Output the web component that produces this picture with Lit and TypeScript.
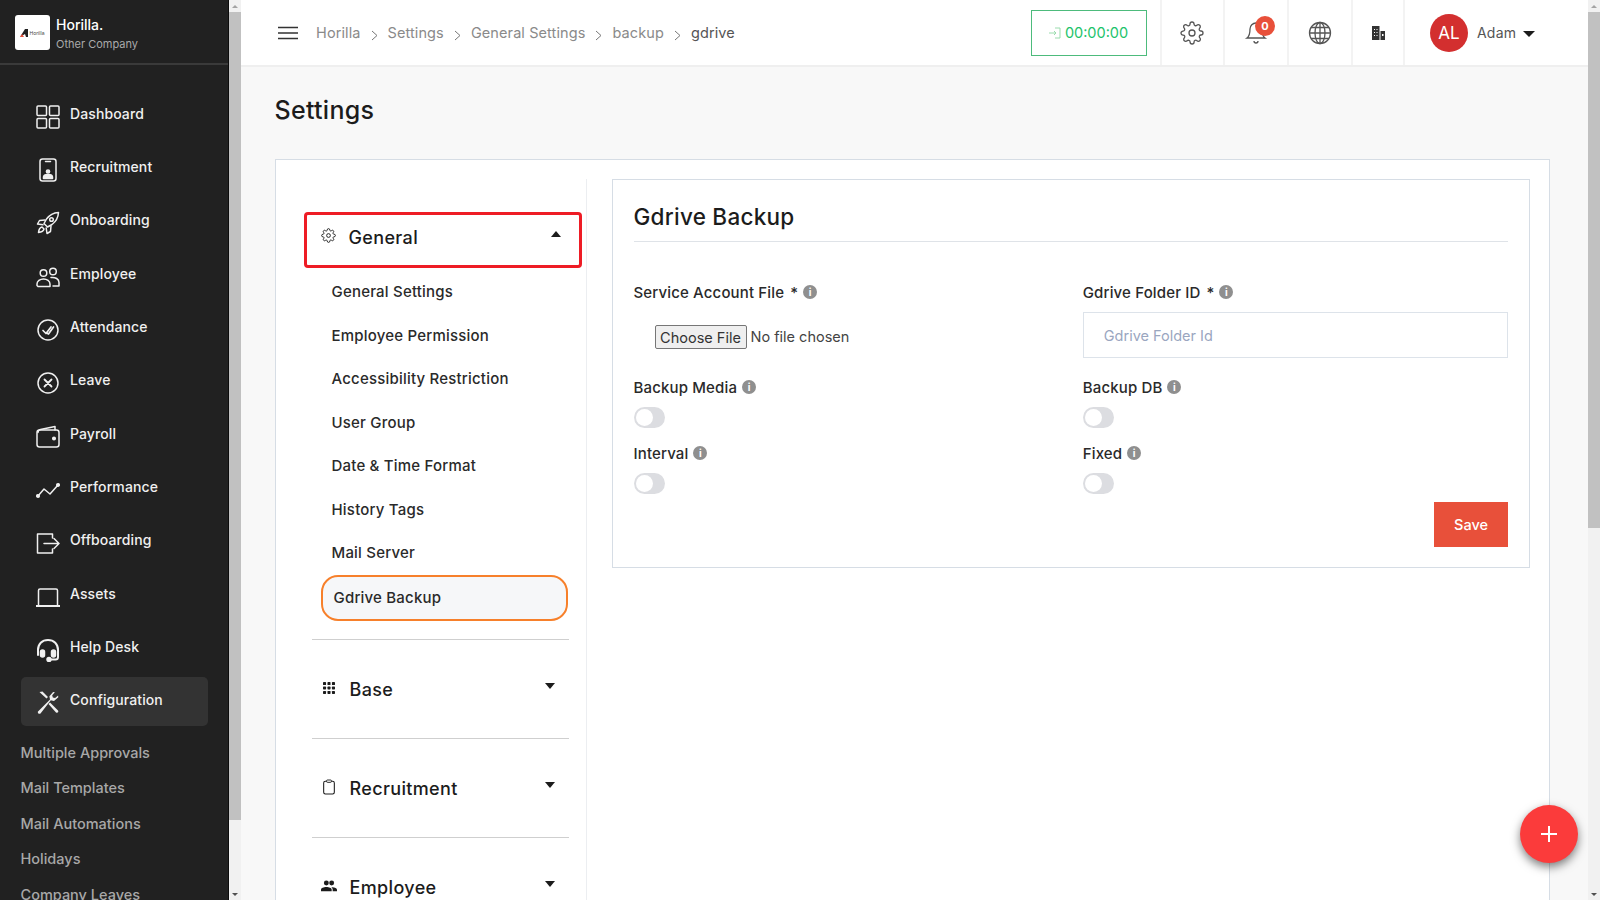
import { LitElement, html, css, svg } from 'lit';
import { customElement } from 'lit/decorators.js';

const GEAR = svg`<circle cx="12" cy="12" r="3"></circle><path d="M19.4 15a1.65 1.65 0 0 0 .33 1.82l.06.06a2 2 0 0 1 0 2.83 2 2 0 0 1-2.83 0l-.06-.06a1.65 1.65 0 0 0-1.82-.33 1.65 1.65 0 0 0-1 1.51V21a2 2 0 0 1-2 2 2 2 0 0 1-2-2v-.09A1.65 1.65 0 0 0 9 19.4a1.65 1.65 0 0 0-1.82.33l-.06.06a2 2 0 0 1-2.83 0 2 2 0 0 1 0-2.83l.06-.06a1.65 1.65 0 0 0 .33-1.82 1.65 1.65 0 0 0-1.51-1H3a2 2 0 0 1-2-2 2 2 0 0 1 2-2h.09A1.65 1.65 0 0 0 4.6 9a1.65 1.65 0 0 0-.33-1.82l-.06-.06a2 2 0 0 1 0-2.83 2 2 0 0 1 2.83 0l.06.06a1.65 1.65 0 0 0 1.82.33H9a1.65 1.65 0 0 0 1-1.51V3a2 2 0 0 1 2-2 2 2 0 0 1 2 2v.09a1.65 1.65 0 0 0 1 1.51 1.65 1.65 0 0 0 1.82-.33l.06-.06a2 2 0 0 1 2.83 0 2 2 0 0 1 0 2.83l-.06.06a1.65 1.65 0 0 0-.33 1.82V9a1.65 1.65 0 0 0 1.51 1H21a2 2 0 0 1 2 2 2 2 0 0 1-2 2h-.09a1.65 1.65 0 0 0-1.51 1z"></path>`;

const NAV_ICONS: Record<string, unknown> = {
  Dashboard: svg`<rect x="1" y="1" width="9.5" height="9.5" rx="1"></rect><rect x="13.5" y="1" width="9.5" height="9.5" rx="1"></rect><rect x="1" y="13.5" width="9.5" height="9.5" rx="1"></rect><rect x="13.5" y="13.5" width="9.5" height="9.5" rx="1"></rect>`,
  Recruitment: svg`<rect x="4" y="1" width="16" height="22" rx="2.5"></rect><path d="M9.5 3.6h5"></path><circle cx="12" cy="13.5" r="1.6" fill="currentColor"></circle><path d="M7.5 20.5v-1.5c0-1.6 1.5-2.6 4.5-2.6s4.5 1 4.5 2.6v1.5z" fill="currentColor"></path>`,
  Onboarding: svg`<path d="M22.5 1.5c-5 .3-9 2.4-12 6.5l-2.5 4.5 3.5 3.5 4.5-2.5c4-3 6.2-7 6.5-12z"></path><circle cx="15.5" cy="8.5" r="1.8"></circle><path d="M9 9l-5.5.5L1.5 13l5.5.8M15 15l-.5 5.5L11 22.5l-.8-5.500"></path><path d="M6 16c-2 .5-3.200 2.500-3.500 5.500 3-.3 5-1.500 5.500-3.500z"></path>`,
  Employee: svg`<circle cx="7.500" cy="8" r="3.300"></circle><circle cx="17" cy="6.500" r="3.300"></circle><path d="M1 20.500v-1.500c0-3 3-5 6.500-5s6.500 2 6.500 5v2.500H2z"></path><path d="M15 12.500c4.500-.5 8 1.500 8 5v3.500h-6"></path>`,
  Attendance: svg`<circle cx="12" cy="12" r="10"></circle><path d="M7 12.500l3 3 5-6.500M11.500 15.500l1 .5 5-7" stroke-width="1.700"></path>`,
  Leave: svg`<circle cx="12" cy="12" r="10"></circle><path d="M8.500 8.500l7 7M15.500 8.500l-7 7" stroke-width="1.800"></path>`,
  Payroll: svg`<path d="M2 7.500c0-1.500.8-2.500 2.500-3L19 1.500v3.500"></path><rect x="1" y="5" width="22" height="17" rx="2.500"></rect><circle cx="18" cy="13.500" r="1.300" fill="currentColor"></circle>`,
  Performance: svg`<path d="M2 18l6-7 6 5 8-9"></path><circle cx="2" cy="18" r="1.300" fill="currentColor"></circle><circle cx="22" cy="7" r="1.300" fill="currentColor"></circle>`,
  Offboarding: svg`<path d="M16.500 7V3H1.500v19h15v-4"></path><path d="M8 12.500h15M18 7.500l5 5-5 5"></path>`,
  Assets: svg`<path d="M2.500 20V5.500c0-.8.500-1.500 1.500-1.500h16c1 0 1.500.700 1.500 1.500V20"></path><path d="M0 21h24" stroke-width="2"></path>`,
  'Help Desk': svg`<path d="M2 16v-4C2 6 6 2 12 2s10 4 10 10v7c0 1.500-1 2.500-2.500 2.500H14" stroke-width="2"></path><path d="M2 12v5" stroke-width="2"></path><rect x="4.500" y="12" width="4" height="7" rx="2" fill="currentColor"></rect><rect x="15.500" y="12" width="4" height="7" rx="2" fill="currentColor"></rect><circle cx="13" cy="21.500" r="2" fill="currentColor"></circle>`,
  Configuration: svg`<path d="M2 21.500L14 9.500l-.6-3.200 3.700-4.300 1.800.2-2.700 3 .6 2.300 2.300.6 3-2.700.2 1.800-4.300 3.700-3.200-.6L4.500 23.500c-1.400 1-3.300-.6-2.500-2z" fill="currentColor" stroke="none"></path><path d="M3.500 2l3-.5 5.500 5.500-1.500 1.500L5 3.500zM12.500 14l1.500-1.500 8 8c1 1.500-.5 3-2 2z" fill="currentColor" stroke="none"></path>`,
};

const NAV = ['Dashboard', 'Recruitment', 'Onboarding', 'Employee', 'Attendance', 'Leave', 'Payroll', 'Performance', 'Offboarding', 'Assets', 'Help Desk', 'Configuration'];
const SUB_NAV = ['Multiple Approvals', 'Mail Templates', 'Mail Automations', 'Holidays', 'Company Leaves'];
const GENERAL = ['General Settings', 'Employee Permission', 'Accessibility Restriction', 'User Group', 'Date & Time Format', 'History Tags', 'Mail Server'];
const CRUMBS = ['Horilla', 'Settings', 'General Settings', 'backup'];

const SECTIONS = [
  { name: 'Base', icon: svg`<g fill="currentColor"><rect x="3" y="3" width="4.600" height="4.600" rx="1"></rect><rect x="9.700" y="3" width="4.600" height="4.600" rx="1"></rect><rect x="16.400" y="3" width="4.600" height="4.600" rx="1"></rect><rect x="3" y="9.700" width="4.600" height="4.600" rx="1"></rect><rect x="9.700" y="9.700" width="4.600" height="4.600" rx="1"></rect><rect x="16.400" y="9.700" width="4.600" height="4.600" rx="1"></rect><rect x="3" y="16.400" width="4.600" height="4.600" rx="1"></rect><rect x="9.700" y="16.400" width="4.600" height="4.600" rx="1"></rect><rect x="16.400" y="16.400" width="4.600" height="4.600" rx="1"></rect></g>` },
  { name: 'Recruitment', icon: svg`<rect x="4" y="3.500" width="16" height="19" rx="2.500" fill="none" stroke="currentColor" stroke-width="1.600"></rect><rect x="8.500" y="1.500" width="7" height="3.500" rx="1" fill="#fff" stroke="currentColor" stroke-width="1.400"></rect>` },
  { name: 'Employee', icon: svg`<g fill="currentColor"><circle cx="16" cy="7.500" r="3.700"></circle><circle cx="8" cy="7.500" r="3.700"></circle><path d="M0 20v-2.500c0-2.500 4-4 8-4s8 1.500 8 4V20z"></path><path d="M17.500 20v-2.500c0-1.500-.7-2.700-2-3.700 4.500-.5 8.500 1.200 8.500 3.700V20z"></path></g>` },
];

@customElement('app-root')
export class AppRoot extends LitElement {
  static styles = css`
    :host {
      display: flex;
      height: 900px;
      overflow: hidden;
      position: relative;
      font-family: Inter, "Noto Sans", sans-serif;
      background: #f8f8f8;
      color: #1c1c1c;
    }
    svg {
      display: block;
      flex: none;
    }

    /* scrollbars */
    .scrollbar {
      flex: none;
      width: 12px;
      height: 900px;
      background: #f1f1f1;
      display: flex;
      flex-direction: column;
      align-items: stretch;
    }
    .arrow {
      flex: none;
      height: 12px;
      display: flex;
      align-items: center;
      justify-content: center;
    }
    .arrow i {
      border-left: 3px solid transparent;
      border-right: 3px solid transparent;
    }
    .arrow.up i {
      border-bottom: 3px solid #a3a3a3;
    }
    .arrow.down i {
      border-top: 3px solid #505050;
    }
    .thumb {
      flex: none;
      background: #c1c1c1;
    }
    .rest {
      flex: 1;
    }

    /* sidebar */
    .sidebar {
      flex: none;
      width: 228px;
      height: 900px;
      background: #212121;
      border-right: 1px solid #0c0c0c;
      overflow: hidden;
    }
    .brand {
      height: 65px;
      box-sizing: border-box;
      padding: 15px 0 0 15px;
      display: flex;
      gap: 6px;
      border-bottom: 2px solid #3a3a3a;
    }
    .logo {
      width: 35px;
      height: 35px;
      background: #fff;
      border-radius: 3px;
      display: flex;
      align-items: center;
      justify-content: center;
      gap: 1px;
      font-size: 5px;
      color: #444;
    }
    .brand-name {
      font-size: 14px;
      font-weight: 500;
      color: #fff;
      line-height: 20px;
    }
    .brand-sub {
      font-size: 11px;
      font-weight: 400;
      color: #aaa;
      line-height: 14px;
      margin-top: 2px;
    }
    .nav {
      padding: 25px 20px 0 21px;
      display: flex;
      flex-direction: column;
      gap: 4.35px;
    }
    .nav-item {
      height: 49px;
      flex: none;
      padding-left: 15px;
      display: flex;
      align-items: center;
      gap: 10px;
      border-radius: 5px;
      color: #f0f0f0;
      font-size: 14px;
      font-weight: 500;
      letter-spacing: 0.1px;
    }
    .nav-item svg {
      margin-top: 4px;
    }
    .nav-item span {
      margin-bottom: 3px;
    }
    .nav-item.active {
      background: #333;
    }
    .nav-item.active svg {
      margin-top: 2px;
    }
    .sub-nav {
      margin-top: 9px;
      padding-left: 20.5px;
    }
    .sub-nav div {
      height: 35.5px;
      line-height: 35.5px;
      font-size: 14.5px;
      font-weight: 500;
      color: #a8a8a8;
      white-space: nowrap;
    }

    /* main column */
    .main {
      flex: 1;
      min-width: 0;
      height: 900px;
      overflow: hidden;
    }
    .topbar {
      height: 65px;
      background: #fff;
      border-bottom: 2px solid #efefef;
      display: flex;
      align-items: stretch;
    }
    .burger {
      margin: 0 18px 0 37px;
      align-self: center;
      color: #333;
    }
    .crumbs {
      display: flex;
      align-items: center;
      gap: 10px;
      font-size: 14.5px;
      color: #8a8a8a;
      letter-spacing: 0.1px;
    }
    .crumbs .current {
      color: #555;
    }
    .crumbs svg {
      margin-top: 5px;
      color: #777;
    }
    .top-right {
      margin-left: auto;
      display: flex;
      align-items: stretch;
    }
    .clock {
      align-self: center;
      width: 116px;
      height: 46px;
      box-sizing: border-box;
      margin-right: 13px;
      border: 1px solid #4dbb7c;
      display: flex;
      align-items: center;
      justify-content: center;
      gap: 4px;
      color: #1cc36b;
      font-size: 14.5px;
    }
    .clock svg {
      color: #9bdcae;
    }
    .cell {
      flex: none;
      box-sizing: border-box;
      border-left: 2px solid #f3f3f3;
      display: flex;
      align-items: center;
      justify-content: center;
      color: #555;
      position: relative;
    }
    .badge {
      position: absolute;
      top: 16px;
      left: 30px;
      width: 20px;
      height: 20px;
      border-radius: 50%;
      background: #e8503a;
      color: #fff;
      font-size: 11px;
      font-weight: 700;
      display: flex;
      align-items: center;
      justify-content: center;
    }
    .profile {
      width: 185px;
      justify-content: flex-start;
      padding-left: 25px;
    }
    .avatar {
      width: 38px;
      height: 38px;
      border-radius: 50%;
      background: #d32f2f;
      color: #fff;
      font-size: 17px;
      display: flex;
      align-items: center;
      justify-content: center;
    }
    .user {
      margin-left: 9px;
      font-size: 14px;
      color: #555;
      letter-spacing: 0.2px;
    }
    .user-caret {
      margin: 3px 0 0 7px;
      border-left: 6px solid transparent;
      border-right: 6px solid transparent;
      border-top: 6px solid #1c1c1c;
    }

    .content {
      padding: 25px 38px 0 33.5px;
    }
    h1 {
      margin: 0 0 31px;
      font-size: 25px;
      line-height: 36px;
      font-weight: 500;
      letter-spacing: 0.3px;
      color: #1c1c1c;
    }
    .card {
      background: #fff;
      border: 1px solid #d6dde5;
      display: flex;
      align-items: flex-start;
      padding-top: 19px;
      height: 800px;
      box-sizing: border-box;
    }

    /* settings menu */
    .menu {
      flex: none;
      width: 310px;
      height: 780px;
      border-right: 1px solid #eceef1;
      box-sizing: content-box;
    }
    .section-head {
      display: flex;
      align-items: flex-start;
      font-size: 18px;
      font-weight: 500;
      letter-spacing: 0.35px;
      line-height: 24px;
      color: #1c1c1c;
    }
    .section-head svg.ico {
      margin-top: 3px;
      margin-right: 13px;
    }
    .section-head .name {
      flex: 1;
      margin-top: 1px;
    }
    .caret {
      margin: 6px 0 0;
      border-left: 5.5px solid transparent;
      border-right: 5.5px solid transparent;
    }
    .caret.down {
      border-top: 6px solid #1c1c1c;
    }
    .caret.up {
      border-bottom: 6px solid #1c1c1c;
    }
    .general {
      margin: 33px 0 0 28px;
      width: 278px;
      height: 56px;
      box-sizing: border-box;
      border: 3px solid #ee1c25;
      border-radius: 4px;
      padding: 10px 18px 0 14px;
    }
    .links {
      margin: 2px 0 0 56px;
    }
    .links div {
      height: 43.5px;
      line-height: 43.5px;
      font-size: 15px;
      font-weight: 500;
      white-space: nowrap;
      letter-spacing: 0.2px;
      color: #2a2a2a;
    }
    .selected {
      margin: 0 0 0 45px;
      width: 247px;
      height: 46px;
      box-sizing: border-box;
      border: 2px solid #f7802b;
      border-radius: 17px;
      background: #f6f7f9;
      padding-left: 11px;
      line-height: 42px;
      font-size: 15px;
      font-weight: 500;
      letter-spacing: 0.2px;
      color: #2a2a2a;
    }
    .section {
      margin-left: 36px;
      width: 257px;
      box-sizing: border-box;
      border-top: 1px solid #cfcfcf;
      padding: 37px 14px 0 9px;
      height: 99px;
    }
    .section.first {
      margin-top: 18px;
    }

    /* form panel */
    .panel {
      flex: 1;
      margin: 0 19px 0 25px;
      box-sizing: border-box;
      border: 1px solid #d6dde5;
      padding: 17px 21px 20px;
    }
    h2 {
      margin: 0;
      font-size: 22.5px;
      font-weight: 500;
      line-height: 40px;
      letter-spacing: 0.25px;
      padding-bottom: 4px;
      border-bottom: 1px solid #dfe3e8;
      color: #1c1c1c;
    }
    .form {
      padding-top: 39px;
      display: grid;
      grid-template-columns: 1fr 1fr;
      column-gap: 24px;
    }
    .field {
      margin-bottom: 14px;
    }
    .field.tall {
      margin-bottom: 18px;
    }
    .label {
      display: flex;
      align-items: center;
      height: 22px;
      margin-bottom: 9px;
      font-size: 15px;
      font-weight: 500;
      letter-spacing: 0.15px;
      color: #2a2a2a;
    }
    .req {
      margin-left: 6px;
    }
    .info {
      margin-left: 5px;
      width: 14px;
      height: 14px;
      border-radius: 50%;
      background: #8f8f8f;
      color: #fff;
      font-size: 10px;
      font-weight: 700;
      display: flex;
      align-items: center;
      justify-content: center;
    }
    .file {
      height: 46px;
      box-sizing: border-box;
      padding: 13px 0 0 21px;
      display: flex;
      align-items: flex-start;
      gap: 4px;
      font-size: 14.5px;
      color: #444;
    }
    .file button {
      width: 92px;
      height: 24px;
      padding: 0;
      font: inherit;
      color: #333;
      background: #efefef;
      border: 1px solid #767676;
      border-radius: 2px;
    }
    .file span {
      line-height: 24px;
    }
    input {
      display: block;
      width: 100%;
      height: 46px;
      box-sizing: border-box;
      padding: 0 20px;
      font: inherit;
      font-size: 14.5px;
      border: 1px solid #dde3ea;
      outline: none;
      background: #fff;
    }
    input::placeholder {
      color: #9aa6bf;
      opacity: 1;
    }
    .toggle {
      width: 31px;
      height: 21px;
      border-radius: 11px;
      background: #dcdde1;
      box-sizing: border-box;
      padding: 2px;
    }
    .toggle i {
      display: block;
      width: 17px;
      height: 17px;
      border-radius: 50%;
      background: #fff;
    }
    .actions {
      display: flex;
      justify-content: flex-end;
      margin-top: -6px;
    }
    .save {
      width: 74px;
      height: 45px;
      border: 0;
      padding: 0;
      background: #e8503a;
      color: #fff;
      font: inherit;
      font-size: 14.5px;
      font-weight: 500;
    }

    .fab {
      position: absolute;
      left: 1520px;
      top: 805px;
      width: 58px;
      height: 58px;
      border: 0;
      padding: 0;
      border-radius: 50%;
      background: #fb3b3b;
      box-shadow: 0 4px 10px rgba(0, 0, 0, 0.5);
      display: flex;
      align-items: center;
      justify-content: center;
      color: #fff;
    }
  `;

  scrollbar(thumbTop: number, thumbHeight: number) {
    return html`
      <div class="scrollbar">
        <div class="arrow up"><i></i></div>
        <div class="thumb" style="margin-top:${thumbTop}px;height:${thumbHeight}px"></div>
        <div class="rest"></div>
        <div class="arrow down"><i></i></div>
      </div>
    `;
  }

  renderSidebar() {
    return html`
      <aside class="sidebar">
        <div class="brand">
          <div class="logo">
            <svg width="8" height="8" viewBox="0 0 8 8"><path d="M0 8L5 0h3v8H6L5 5z" fill="#222"></path><path d="M0 8l2-3 2 3z" fill="#e8503a"></path></svg>
            <span>Horilla</span>
          </div>
          <div>
            <div class="brand-name">Horilla.</div>
            <div class="brand-sub">Other Company</div>
          </div>
        </div>
        <nav class="nav">
          ${NAV.map(
            (name) => html`
              <div class="nav-item ${name === 'Configuration' ? 'active' : ''}">
                <svg width="24" height="24" viewBox="0 0 24 24" fill="none" stroke="currentColor" stroke-width="1.500" stroke-linecap="round" stroke-linejoin="round">${NAV_ICONS[name]}</svg>
                <span>${name}</span>
              </div>
            `
          )}
        </nav>
        <div class="sub-nav">
          ${SUB_NAV.map((name) => html`<div>${name}</div>`)}
        </div>
      </aside>
    `;
  }

  renderTopbar() {
    const chevron = html`<svg width="7" height="11" viewBox="0 0 7 11" fill="none" stroke="currentColor" stroke-width="1"><path d="M1 1l5 4.500-5 4.500"></path></svg>`;
    return html`
      <header class="topbar">
        <svg class="burger" width="20" height="14" viewBox="0 0 20 14" fill="none" stroke="currentColor" stroke-width="1.500"><path d="M0 1.500h20M0 7h20M0 12.500h20"></path></svg>
        <div class="crumbs">
          ${CRUMBS.map((c) => html`<span>${c}</span>${chevron}`)}
          <span class="current">gdrive</span>
        </div>
        <div class="top-right">
          <div class="clock">
            <svg width="12" height="12" viewBox="0 0 12 12" fill="none" stroke="currentColor" stroke-width="1"><path d="M6 1h5v10H6M0 6h7M5 4l2 2-2 2"></path></svg>
            <span>00:00:00</span>
          </div>
          <div class="cell" style="width:63.500px">
            <svg width="24" height="24" viewBox="0 0 24 24" fill="none" stroke="currentColor" stroke-width="1.300">${GEAR}</svg>
          </div>
          <div class="cell" style="width:64px">
            <svg width="24" height="24" viewBox="0 0 24 24" fill="none" stroke="currentColor" stroke-width="1.300"><path d="M18 8A6 6 0 0 0 6 8c0 7-3 9-3 9h18s-3-2-3-9"></path><path d="M14 20a2 2 0 0 1-4 0"></path></svg>
            <span class="badge">0</span>
          </div>
          <div class="cell" style="width:64px">
            <svg width="24" height="24" viewBox="0 0 24 24" fill="none" stroke="currentColor" stroke-width="1.300"><circle cx="12" cy="12" r="10.500"></circle><ellipse cx="12" cy="12" rx="5" ry="10.500"></ellipse><path d="M12 1.500v21M1.500 12h21M3 6.500h18M3 17.500h18"></path></svg>
          </div>
          <div class="cell" style="width:52px">
            <svg width="13" height="14" viewBox="0 0 13 14" fill="#333"><path d="M0 0h7.500v14H0zM8.500 5H13v9H8.500z"></path><path d="M2 3h1v1H2zM4.500 3h1v1h-1zM2 6h1v1H2zM4.500 6h1v1h-1zM2 9h1v1H2zM4.500 9h1v1h-1z" fill="#fff"></path><path d="M10 8h1.500v2H10z" fill="#fff"></path></svg>
          </div>
          <div class="cell profile">
            <div class="avatar">AL</div>
            <span class="user">Adam</span>
            <span class="user-caret"></span>
          </div>
        </div>
      </header>
    `;
  }

  renderMenu() {
    return html`
      <div class="menu">
        <div class="general section-head">
          <svg class="ico" width="15" height="15" viewBox="0 0 24 24" fill="none" stroke="currentColor" stroke-width="1.500">${GEAR}</svg>
          <span class="name">General</span>
          <i class="caret up"></i>
        </div>
        <div class="links">
          ${GENERAL.map((name) => html`<div>${name}</div>`)}
        </div>
        <div class="selected">Gdrive Backup</div>
        ${SECTIONS.map(
          (s, i) => html`
            <div class="section section-head ${i === 0 ? 'first' : ''}">
              <svg class="ico" width="16" height="16" viewBox="0 0 24 24">${s.icon}</svg>
              <span class="name">${s.name}</span>
              <i class="caret down"></i>
            </div>
          `
        )}
      </div>
    `;
  }

  field(label: string, required: boolean, control: unknown, tall = false) {
    return html`
      <div class="field ${tall ? 'tall' : ''}">
        <div class="label">
          <span>${label}</span>
          ${required ? html`<span class="req">*</span>` : ''}
          <span class="info">i</span>
        </div>
        ${control}
      </div>
    `;
  }

  renderPanel() {
    const toggle = html`<div class="toggle"><i></i></div>`;
    return html`
      <section class="panel">
        <h2>Gdrive Backup</h2>
        <div class="form">
          ${this.field('Service Account File', true, html`<div class="file"><button>Choose File</button><span>No file chosen</span></div>`, true)}
          ${this.field('Gdrive Folder ID', true, html`<input placeholder="Gdrive Folder Id" />`, true)}
          ${this.field('Backup Media', false, toggle)}
          ${this.field('Backup DB', false, toggle)}
          ${this.field('Interval', false, toggle)}
          ${this.field('Fixed', false, toggle)}
        </div>
        <div class="actions"><button class="save">Save</button></div>
      </section>
    `;
  }

  render() {
    return html`
      ${this.renderSidebar()}
      ${this.scrollbar(0, 808)}
      <main class="main">
        ${this.renderTopbar()}
        <div class="content">
          <h1>Settings</h1>
          <div class="card">
            ${this.renderMenu()}
            ${this.renderPanel()}
          </div>
        </div>
      </main>
      ${this.scrollbar(0, 516)}
      <button class="fab">
        <svg width="16" height="16" viewBox="0 0 16 16" stroke="currentColor" stroke-width="2"><path d="M8 0v16M0 8h16"></path></svg>
      </button>
    `;
  }
}
